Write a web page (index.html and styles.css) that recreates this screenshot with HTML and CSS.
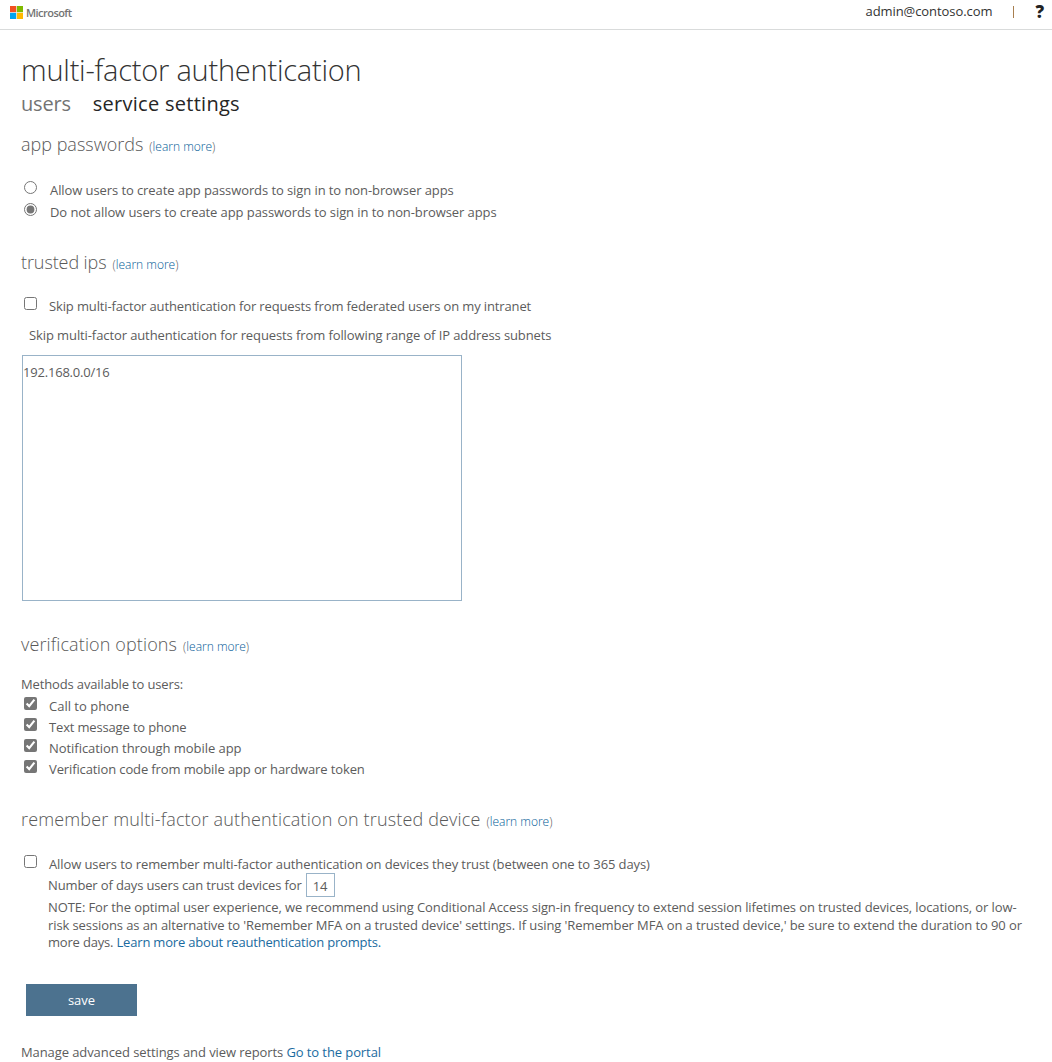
FILE: index.html
```html
<!DOCTYPE html>
<html lang="en">
<head>
<meta charset="utf-8">
<title>multi-factor authentication</title>
<link rel="stylesheet" href="styles.css">
</head>
<body>
<header class="topbar">
  <div class="brand">
    <svg class="logo" width="13" height="13" viewBox="0 0 13 13"><path fill="#f25022" d="M0 0h6.2v6.2H0z"/><path fill="#7fba00" d="M6.8 0H13v6.2H6.8z"/><path fill="#00a4ef" d="M0 6.8h6.2V13H0z"/><path fill="#ffb900" d="M6.8 6.8H13V13H6.8z"/></svg>
    <span class="brand-name">Microsoft</span>
  </div>
  <div class="account">
    <span class="email">admin@contoso.com</span>
    <span class="divider"></span>
    <span class="help">?</span>
  </div>
</header>
<main class="page">
  <h1 class="title"><span class="t-title">multi-factor authentication</span></h1>
  <nav class="tabs"><a class="tab t-users">users</a><a class="tab active t-service">service settings</a></nav>

  <section class="section passwords">
    <h2 class="heading"><span class="t-app">app passwords</span><small class="more">(<a>learn more</a>)</small></h2>
    <label class="row radio"><input type="radio" name="app"><span class="t-allow">Allow users to create app passwords to sign in to non-browser apps</span></label>
    <label class="row radio"><input type="radio" name="app" checked><span class="t-deny">Do not allow users to create app passwords to sign in to non-browser apps</span></label>
  </section>

  <section class="section ips">
    <h2 class="heading"><span class="t-ips">trusted ips</span><small class="more">(<a>learn more</a>)</small></h2>
    <label class="row"><input type="checkbox"><span class="t-skip">Skip multi-factor authentication for requests from federated users on my intranet</span></label>
    <p class="range"><span class="t-range">Skip multi-factor authentication for requests from following range of IP address subnets</span></p>
    <textarea class="subnets" spellcheck="false">192.168.0.0/16</textarea>
  </section>

  <section class="section options">
    <h2 class="heading"><span class="t-ver">verification options</span><small class="more">(<a>learn more</a>)</small></h2>
    <p class="methods"><span class="t-methods">Methods available to users:</span></p>
    <label class="row"><input type="checkbox" checked><span class="t-call">Call to phone</span></label>
    <label class="row"><input type="checkbox" checked><span class="t-text">Text message to phone</span></label>
    <label class="row"><input type="checkbox" checked><span class="t-notif">Notification through mobile app</span></label>
    <label class="row"><input type="checkbox" checked><span class="t-code">Verification code from mobile app or hardware token</span></label>
  </section>

  <section class="section remember">
    <h2 class="heading"><span class="t-rem">remember multi-factor authentication on trusted device</span><small class="more">(<a>learn more</a>)</small></h2>
    <label class="row"><input type="checkbox"><span class="t-trust">Allow users to remember multi-factor authentication on devices they trust (between one to 365 days)</span></label>
    <div class="days"><span class="t-days">Number of days users can trust devices for</span><input class="days-input" type="text" value="14"></div>
    <p class="note"><span class="t-note1">NOTE: For the optimal user experience, we recommend using Conditional Access sign-in frequency to extend session lifetimes on trusted devices, locations, or low-</span><br><span class="t-note2">risk sessions as an alternative to 'Remember MFA on a trusted device' settings. If using 'Remember MFA on a trusted device,' be sure to extend the duration to 90 or</span><br><span class="t-note3">more days. <a>Learn more about reauthentication prompts.</a></span></p>
  </section>

  <button class="save">save</button>
  <p class="footer"><span class="t-foot">Manage advanced settings and view reports <a>Go to the portal</a></span></p>
</main>
</body>
</html>
```
FILE: styles.css
```css
* { box-sizing: border-box; }
body, h1, h2, p { margin: 0; font-weight: 400; }
body {
  height: 1062px;
  overflow: hidden;
  background: #fff;
  color: #5c5c5c;
  font: 13px/22px "Open Sans", "Noto Sans", sans-serif;
  white-space: nowrap;
}
a { color: #1a6ba0; text-decoration: none; }

.topbar {
  display: flex;
  justify-content: space-between;
  height: 30px;
  padding: 0 8px 0 10px;
  border-bottom: 1px solid #d9dbdb;
}
.brand { display: flex; gap: 3px; padding-top: 6px; }
.brand-name { font-size: 11px; line-height: 14px; font-weight: 600; letter-spacing: -0.55px; color: #737373; }
.account { display: flex; align-items: center; height: 24px; color: #333; }
.email { height: 24px; letter-spacing: -0.07px; }
.divider { width: 1px; height: 12px; margin: 0 21px 0 21px; background: #a87f4f; }
.help { font-size: 17px; font-weight: 800; color: #222; }

.page { padding: 20px 20px 0 21px; }
.title { height: 40px; font-size: 29px; line-height: 40px; font-weight: 300; color: #333; }
.tabs { display: flex; gap: 22px; height: 40px; font-size: 20px; line-height: 27px; }
.tab { color: #737373; }
.tab.active { color: #262626; }

.heading { display: flex; align-items: baseline; gap: 6px; height: 28px; font-size: 18px; line-height: 28px; font-weight: 300; color: #595959; }
.more { font-size: 12px; font-weight: 300; }
.more a { color: #005a96; }
.row { display: flex; height: 22px; }
.row input { flex: none; width: 13px; height: 13px; margin: 2px 12px 0 3px; accent-color: #767676; }
.row.radio input { margin-right: 13px; }

.passwords { height: 118px; }
.passwords .heading { margin-bottom: 21px; }
.ips { height: 382px; }
.ips .heading { margin-bottom: 19px; }
.range { margin: 7px 0 9px; padding-left: 8px; }
.subnets {
  display: block;
  width: 440px;
  height: 246px;
  margin-left: 1px;
  padding: 5px 0;
  border: 1px solid #99b3c8;
  resize: none;
  color: inherit;
  font: inherit;
  letter-spacing: -0.2px;
}
.options { height: 175px; }
.options .heading { margin-bottom: 15px; }
.options .row { height: 21px; }
.remember { height: 179px; }
.remember .heading { margin-bottom: 20px; }
.days { display: flex; height: 21px; padding-left: 27px; line-height: 21px; }
.days-input {
  width: 29px;
  height: 24px;
  margin: -2px 0 0 4px;
  padding: 1px 0 0;
  border: 1px solid #99b3c8;
  color: inherit;
  font: inherit;
  text-align: center;
}
.note { padding: 3px 0 0 27px; line-height: 17.6px; }
.save { display: block; width: 111px; height: 32px; margin: 0 0 25px 5px; border: 0; background: #4c728f; color: #fff; font: inherit; }

/* Tracking per line of text */
.t-title { letter-spacing: -0.22px; }
.t-users { letter-spacing: -0.2px; }
.t-service { letter-spacing: 0.28px; }
.t-allow, .t-deny { letter-spacing: -0.084px; }
.t-ips { letter-spacing: -0.09px; }
.t-skip { letter-spacing: -0.135px; }
.t-range { letter-spacing: -0.1px; }
.t-ver { letter-spacing: 0.12px; }
.t-methods { letter-spacing: -0.14px; }
.t-text { letter-spacing: -0.16px; }
.t-notif { letter-spacing: -0.05px; }
.t-code { letter-spacing: -0.12px; }
.t-rem { letter-spacing: 0.155px; }
.t-trust { letter-spacing: -0.1px; }
.t-days { letter-spacing: -0.14px; }
.t-note1, .t-note2 { letter-spacing: -0.1px; }
.t-note3 { letter-spacing: -0.185px; }
.t-foot { letter-spacing: -0.09px; }
```
